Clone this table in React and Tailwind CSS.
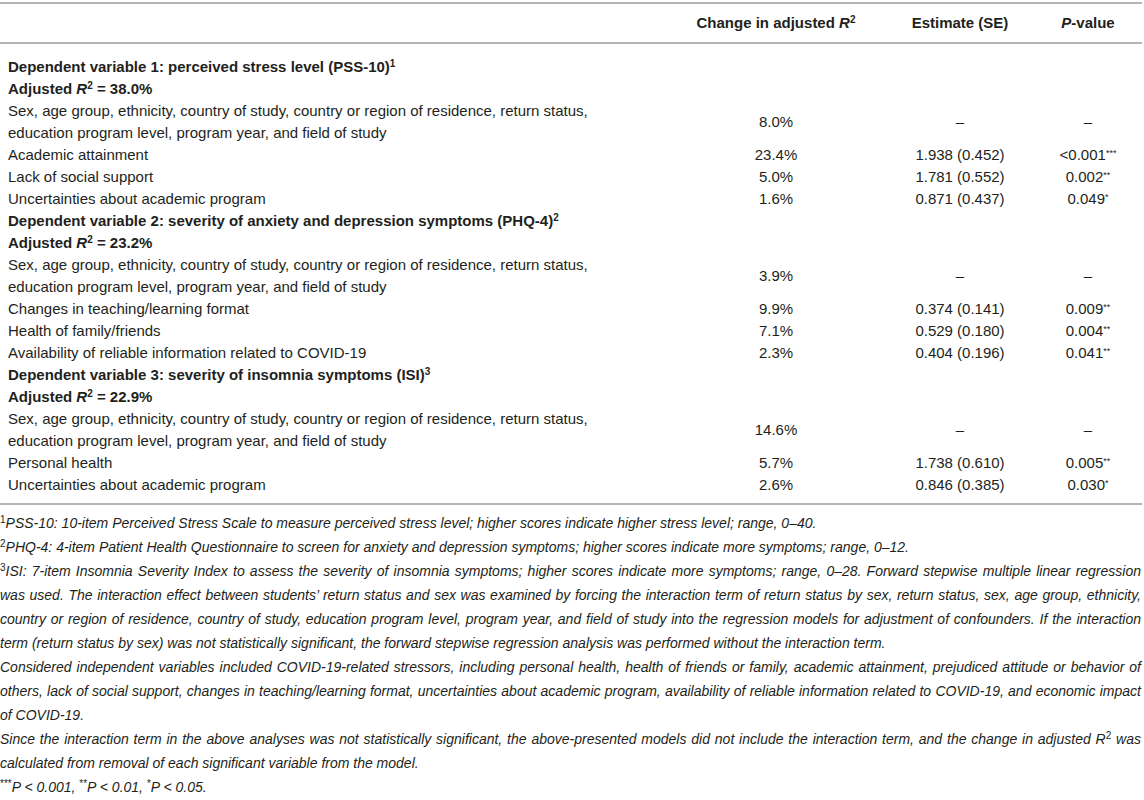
import React from "react";

const sexText = [
  "Sex, age group, ethnicity, country of study, country or region of residence, return status,",
  "education program level, program year, and field of study",
];

const blocks = [
  {
    title: "Dependent variable 1: perceived stress level (PSS-10)",
    note: "1",
    r2: "38.0%",
    base: "8.0%",
    rows: [
      ["Academic attainment", "23.4%", "1.938 (0.452)", "<0.001", "***"],
      ["Lack of social support", "5.0%", "1.781 (0.552)", "0.002", "**"],
      ["Uncertainties about academic program", "1.6%", "0.871 (0.437)", "0.049", "*"],
    ],
  },
  {
    title: "Dependent variable 2: severity of anxiety and depression symptoms (PHQ-4)",
    note: "2",
    r2: "23.2%",
    base: "3.9%",
    rows: [
      ["Changes in teaching/learning format", "9.9%", "0.374 (0.141)", "0.009", "**"],
      ["Health of family/friends", "7.1%", "0.529 (0.180)", "0.004", "**"],
      ["Availability of reliable information related to COVID-19", "2.3%", "0.404 (0.196)", "0.041", "**"],
    ],
  },
  {
    title: "Dependent variable 3: severity of insomnia symptoms (ISI)",
    note: "3",
    r2: "22.9%",
    base: "14.6%",
    rows: [
      ["Personal health", "5.7%", "1.738 (0.610)", "0.005", "**"],
      ["Uncertainties about academic program", "2.6%", "0.846 (0.385)", "0.030", "*"],
    ],
  },
];

const cols = "grid grid-cols-[690px_172px_178px_96px] items-center";

function Row({ label, change, est, p, stars }) {
  return (
    <div className={cols}>
      <div className="pl-2">{label}</div>
      <div className="text-center">{change}</div>
      <div className="text-center pl-[18px]">{est}</div>
      <div className="text-center whitespace-nowrap">
        {p}
        {stars && <sup className="text-[9px]">{stars}</sup>}
      </div>
    </div>
  );
}

// full-width footnote lines are stretched like the justified original
const just = "[text-align-last:justify]";

function App() {
  return (
    <div className="w-[1144px] min-h-[800px] bg-white text-[#231f20] text-[15px] leading-[22px] font-['Liberation_Sans',Arial,sans-serif]">
      <div className="pt-[2px]">
        <div className={`${cols} h-[42px] font-bold border-t-2 border-b-2 border-[#b4b4b4] w-[1142px]`}>
          <div></div>
          <div className="text-center">
            Change in adjusted <i>R</i>
            <sup className="text-[10px]">2</sup>
          </div>
          <div className="text-center pl-[18px]">Estimate (SE)</div>
          <div className="text-center">
            <i>P</i>-value
          </div>
        </div>

        <div className="pt-[12px] pb-[7px] border-b-2 border-[#b4b4b4] w-[1142px]">
          {blocks.map((b) => (
            <div key={b.note}>
              <div className="pl-2 font-bold">
                {b.title}
                <sup className="text-[10px]">{b.note}</sup>
              </div>
              <div className="pl-2 font-bold">
                Adjusted <i>R</i>
                <sup className="text-[10px]">2</sup> = {b.r2}
              </div>
              <Row
                label={
                  <>
                    {sexText[0]}
                    <br />
                    {sexText[1]}
                  </>
                }
                change={b.base}
                est="–"
                p="–"
              />
              {b.rows.map((r) => (
                <Row key={r[0]} label={r[0]} change={r[1]} est={r[2]} p={r[3]} stars={r[4]} />
              ))}
            </div>
          ))}
        </div>

        <div className="pt-[6px] italic text-[14px] leading-[24px] w-[1141px]">
          <div>
            <sup className="not-italic text-[10px]">1</sup>PSS-10: 10-item Perceived Stress Scale to measure perceived stress level; higher scores indicate higher stress level; range, 0–40.
          </div>
          <div>
            <sup className="not-italic text-[10px]">2</sup>PHQ-4: 4-item Patient Health Questionnaire to screen for anxiety and depression symptoms; higher scores indicate more symptoms; range, 0–12.
          </div>
          <div className={just}>
            <sup className="not-italic text-[10px]">3</sup>ISI: 7-item Insomnia Severity Index to assess the severity of insomnia symptoms; higher scores indicate more symptoms; range, 0–28. Forward stepwise multiple linear regression
          </div>
          <div className={just}>
            was used. The interaction effect between students’ return status and sex was examined by forcing the interaction term of return status by sex, return status, sex, age group, ethnicity,
          </div>
          <div className={just}>
            country or region of residence, country of study, education program level, program year, and field of study into the regression models for adjustment of confounders. If the interaction
          </div>
          <div>
            term (return status by sex) was not statistically significant, the forward stepwise regression analysis was performed without the interaction term.
          </div>
          <div className={just}>
            Considered independent variables included COVID-19-related stressors, including personal health, health of friends or family, academic attainment, prejudiced attitude or behavior of
          </div>
          <div className={just}>
            others, lack of social support, changes in teaching/learning format, uncertainties about academic program, availability of reliable information related to COVID-19, and economic impact
          </div>
          <div>of COVID-19.</div>
          <div className={just}>
            Since the interaction term in the above analyses was not statistically significant, the above-presented models did not include the interaction term, and the change in adjusted R
            <sup className="not-italic text-[10px]">2</sup> was
          </div>
          <div>calculated from removal of each significant variable from the model.</div>
          <div>
            <sup className="not-italic text-[10px]">***</sup>P &lt; 0.001, <sup className="not-italic text-[10px]">**</sup>P &lt; 0.01, <sup className="not-italic text-[10px]">*</sup>P &lt; 0.05.
          </div>
        </div>
      </div>
    </div>
  );
}

export default App;
